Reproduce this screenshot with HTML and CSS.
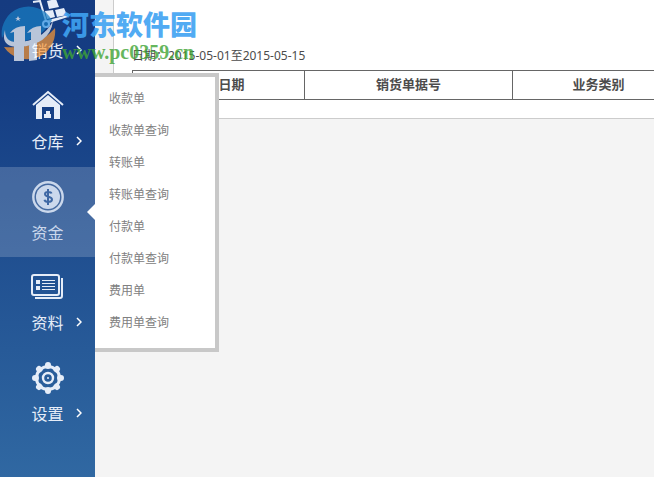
FILE: index.html
```html
<!DOCTYPE html>
<html lang="zh-CN">
<head>
  <meta charset="UTF-8">
  <title>销货单查询</title>
  <link rel="stylesheet" href="styles.css">
</head>
<body>
  <nav class="sidebar">
    <a class="nav-item" href="#">
      <svg class="nav-icon" viewBox="0 0 36 34" fill="#e6edf8">
        <path d="M3 4l7-1 6 20" fill="none" stroke="#e6edf8" stroke-width="2"/>
        <path d="M17 3l9-2 3 8-10 2zM15 13l8-1 2 7-8 2zM25 12l9-2 3 7-10 2z"/>
        <path d="M18 22l20-5v2l-19 6z"/>
        <circle cx="16" cy="26" r="3" fill="none" stroke="#e6edf8" stroke-width="2"/>
      </svg>
      <span class="nav-text">销货</span>
      <svg class="arrow" viewBox="0 0 6 10"><path d="M1 1l4 4-4 4"/></svg>
    </a>
    <a class="nav-item" href="#">
      <svg class="nav-icon" viewBox="0 0 36 34" fill="#e6edf8">
        <path d="M3 16L18 3l15 13" fill="none" stroke="#e6edf8" stroke-width="2"/>
        <path fill-rule="evenodd" d="M18 6l12 10v14h-6V18H12v12H6V16z"/>
        <path d="M14 29v-4h2v-3h4v3h1v4z"/>
      </svg>
      <span class="nav-text">仓库</span>
      <svg class="arrow" viewBox="0 0 6 10"><path d="M1 1l4 4-4 4"/></svg>
    </a>
    <a class="nav-item active" href="#">
      <svg class="nav-icon" viewBox="0 0 36 34">
        <circle cx="18" cy="17" r="14.7" fill="none" stroke="#cbd8ec" stroke-width="2.4"/>
        <circle cx="18" cy="17" r="12" fill="#cbd8ec"/>
        <path d="M21.5 13.5c-.5-2-6.500-2.500-6.500.5 0 3.500 7 2 7 5.500 0 3.200-7 3-7.500.3M18 9v16" fill="none" stroke="#3f68a4" stroke-width="2"/>
      </svg>
      <span class="nav-text">资金</span>
    </a>
    <a class="nav-item" href="#">
      <svg class="nav-icon" viewBox="0 0 36 34" fill="none" stroke="#e6edf8">
        <rect x="2" y="5" width="27" height="20" rx="2" stroke-width="2"/>
        <path d="M32 8v18q0 2-2 2H5" stroke-width="2"/>
        <path d="M12 10.500h13M12 13.500h13M12 16.500h13M12 19.500h13"/>
        <path d="M6 10h4v4H6zM6 16h4v4H6z" fill="#e6edf8" stroke="none"/>
      </svg>
      <span class="nav-text">资料</span>
      <svg class="arrow" viewBox="0 0 6 10"><path d="M1 1l4 4-4 4"/></svg>
    </a>
    <a class="nav-item" href="#">
      <svg class="nav-icon" viewBox="0 0 36 34" fill="none" stroke="#e6edf8">
        <circle cx="18" cy="17" r="11.500" stroke-width="3"/>
        <g stroke-width="6" stroke-linecap="round">
          <path d="M18 4v1M18 29v1M5 17h1M30 17h1M9 8l.5.5M27 8l-.5.5M9 26l.5-.5M27 26l-.5-.5"/>
        </g>
        <circle cx="18" cy="17" r="5" stroke-width="2.400"/>
        <circle cx="18" cy="17" r="1" fill="#e6edf8" stroke="none"/>
      </svg>
      <span class="nav-text">设置</span>
      <svg class="arrow" viewBox="0 0 6 10"><path d="M1 1l4 4-4 4"/></svg>
    </a>
  </nav>

  <main class="content">
    <section class="report">
      <p class="date">日期：2015-05-01至2015-05-15</p>
      <table>
        <thead>
          <tr>
            <th>销货日期</th>
            <th class="wide">销货单据号</th>
            <th>业务类别</th>
          </tr>
        </thead>
      </table>
    </section>
  </main>

  <div class="submenu">
    <a href="#">收款单</a>
    <a href="#">收款单查询</a>
    <a href="#">转账单</a>
    <a href="#">转账单查询</a>
    <a href="#">付款单</a>
    <a href="#">付款单查询</a>
    <a href="#">费用单</a>
    <a href="#">费用单查询</a>
  </div>

  <div class="watermark">
    <svg class="mark-logo" viewBox="0 0 58 64">
      <path d="M55 28A28 28 0 0 1 4 47Q36 50 55 28z" fill="#fe9933"/>
      <path d="M2 38A27 27 0 0 1 52 20Q40 42 14 42Q5 42 5 33z" fill="#187fc5"/>
      <path d="M5 30Q5 42 16 42Q42 42 53 21Q50 45 18 47Q0 47 5 30z" fill="#fff"/>
      <path d="M14 61V32l-4 1q5-7 15-7v16l-1 3v16zM29 61V46l2-4V32l-4 1q5-7 14-7v10l-4 4v20z" fill="#fff"/>
      <path d="M18 16l1 2h2l-2 1 1 2-2-1-2 1 1-2-2-1h2z" fill="#fff"/>
      <circle cx="46" cy="24" r="3" fill="none" stroke="#2d8fe0" stroke-width="2"/>
    </svg>
    <div class="mark-text">
      <div class="mark-name">河东软件园</div>
      <div class="mark-url">www.pc0359.cn</div>
    </div>
  </div>
</body>
</html>
```

FILE: styles.css
```css
* {
  box-sizing: border-box;
}

body {
  margin: 0;
  display: flex;
  position: relative;
  height: 100vh;
  overflow: hidden;
  background: #f4f4f4;
  color: #4c4c4c;
  font-family: "Noto Sans", "Noto Sans CJK SC", sans-serif;
  font-size: 12px;
}

a {
  text-decoration: none;
}

/* left navigation, scrolled a little past its top */
.sidebar {
  flex: 0 0 95px;
  display: flex;
  flex-direction: column;
  justify-content: flex-end;
  padding-bottom: 38px;
  background: linear-gradient(#153b80, #153e84 20%, #3068a2);
}

.nav-item {
  flex: none;
  display: grid;
  grid-template-columns: 1fr auto 1fr;
  align-items: center;
  align-content: start;
  row-gap: 6px;
  height: 91px;
  padding-top: 13px;
  color: #e6edf8;
  font-family: "Noto Sans CJK SC", sans-serif;
  font-size: 16px;
  line-height: 24px;
}

.nav-item.active {
  height: 90px;
  background: rgba(255, 255, 255, 0.18);
  color: #cbd8ec;
}

.nav-icon {
  grid-column: 1 / 4;
  justify-self: center;
  width: 36px;
  height: 34px;
  overflow: visible;
}

.nav-text {
  grid-column: 2;
}

.arrow {
  width: 6px;
  height: 10px;
  margin-left: 12px;
  fill: none;
  stroke: #fff;
  stroke-width: 1.5;
}

.content {
  flex: 1;
  min-width: 0;
  padding-left: 18px;
}

.report {
  padding: 46px 0 18px 18px;
  overflow: hidden;
  background: #fff;
  border-left: 1px solid #ccc;
  border-bottom: 1px solid #ccc;
}

.date {
  margin: 0 0 4px;
  line-height: 20px;
}

table {
  width: 553px;
  table-layout: fixed;
  border-collapse: collapse;
}

th {
  height: 29px;
  padding: 0 0 2px;
  border: 1px solid #666;
  font-family: "Noto Sans CJK SC", sans-serif;
  font-size: 13px;
  line-height: 18px;
}

.wide {
  width: 208px;
}

/* flyout of the active item */
.submenu {
  position: absolute;
  left: 95px;
  top: 73px;
  width: 124px;
  padding: 5px 0 10px;
  background: #fff;
  border: 4px solid #c8c8c8;
  border-left: 0;
}

.submenu::before {
  content: "";
  position: absolute;
  left: -8px;
  top: 127px;
  border: 8px solid transparent;
  border-left: 0;
  border-right-color: #fff;
}

.submenu a {
  display: block;
  padding-left: 14px;
  color: #808080;
  font-family: "Noto Sans CJK SC", sans-serif;
  line-height: 32px;
}

.watermark {
  position: absolute;
  left: 0;
  top: 0;
  display: flex;
  gap: 4px;
  pointer-events: none;
}

.mark-logo {
  width: 58px;
  height: 64px;
  opacity: 0.7;
}

.mark-text {
  padding-top: 8px;
}

.mark-name {
  color: #3fa2f2;
  font-family: "Noto Sans CJK SC", sans-serif;
  font-size: 27px;
  font-weight: 900;
  line-height: 32px;
  opacity: 0.9;
}

.mark-url {
  color: #3fa535;
  font-family: "Liberation Serif", serif;
  font-size: 20px;
  font-weight: bold;
  line-height: 24px;
  opacity: 0.8;
}
```
